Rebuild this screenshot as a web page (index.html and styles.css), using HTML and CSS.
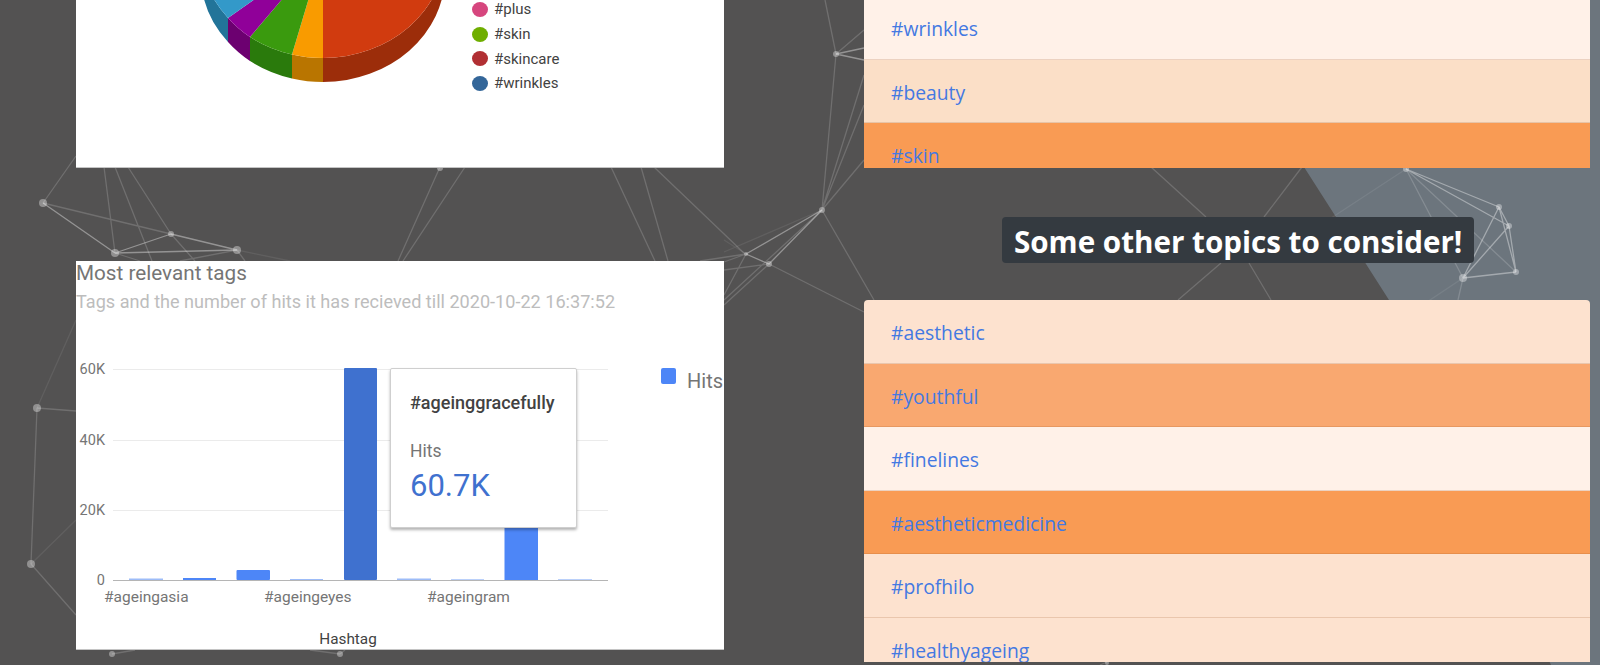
FILE: index.html
```html
<!DOCTYPE html>
<html lang="en">
<head>
<meta charset="utf-8">
<title>Hashtags</title>
<link rel="stylesheet" href="styles.css">
</head>
<body>
<svg class="backdrop" viewBox="0 0 1600 665" aria-hidden="true">
  <polygon class="slate" points="1197,0 1600,0 1600,665 1551,665 1389,300 1304,167"/>
  <path class="net net-faint" d="M76 320L37 408M76 520L31 564M237 250L290 261M1406 169L1290 245M1463 278L1400 320M822 210L724 252M746 254L724 240"/>
  <path class="net" d="M76 156L43 203M43 203L171 234M104 167L115 253M115 167L152 261M128 167L171 234M237 250L180 261M171 234L195 261M115 253L140 261M237 250L245 261M37 408L31 564M37 408L76 411M31 564L76 615
    M440 167L398 261M465 167L403 261M611 167L655 261M641 167L668 261M654 167L745 254M825 0L836 54M836 54L822 210M836 54L864 30M822 210L864 75M822 210L864 105M822 210L864 160M822 210L724 300M822 210L874 300M769 264L864 312M769 264L724 270M769 264L724 305M746 254L724 262M746 254L724 295M746 254L700 261
    M1151 167L1206 217M1302 167L1264 217M1221 263L1178 300M1249 263L1271 300M1406 169L1463 278M1406 169L1516 272M1463 278L1458 300M112 654L135 650M340 654L310 650M340 654L345 650M1107 662L1100 665"/>
  <path class="net net-bright" d="M43 203L115 253M115 253L171 234M115 253L237 250M171 234L237 250M836 54L864 60M836 54L864 48M822 210L746 254M822 210L769 264M746 254L769 264M1406 169L1499 207M1406 169L1509 226M1499 207L1509 226M1499 207L1516 272M1499 207L1463 278M1509 226L1463 278M1509 226L1516 272M1463 278L1516 272"/>
  <g class="halo">
    <circle cx="43" cy="203" r="4"/><circle cx="115" cy="253" r="4"/><circle cx="171" cy="234" r="3"/><circle cx="237" cy="250" r="4"/><circle cx="37" cy="408" r="4"/><circle cx="31" cy="564" r="4"/><circle cx="440" cy="168" r="3"/><circle cx="836" cy="54" r="3"/><circle cx="822" cy="210" r="3"/><circle cx="746" cy="254" r="2"/><circle cx="769" cy="264" r="3"/><circle cx="1406" cy="169" r="3"/><circle cx="1499" cy="207" r="3"/><circle cx="1509" cy="226" r="3"/><circle cx="1516" cy="272" r="3"/><circle cx="1463" cy="278" r="4"/><circle cx="112" cy="654" r="3"/><circle cx="340" cy="654" r="3"/><circle cx="1107" cy="663" r="2"/>
  </g>
</svg>

<main class="page">
  <section class="col-left">
    <article class="card card-pie">
      <svg class="pie" width="396" height="167" viewBox="76 0 396 167" aria-hidden="true">
        <g class="pie-side">
          <path fill="#9c2d0a" d="M323 58A122 107 0 0 0 445 -49V-25A122 107 0 0 1 323 82Z"/>
          <path fill="#b97500" d="M292 54.500A122 107 0 0 0 323 58V82A122 107 0 0 1 292 78.500Z"/>
          <path fill="#2a7a0c" d="M250 37A122 107 0 0 0 292 54.500V78.500A122 107 0 0 1 250 61Z"/>
          <path fill="#6c0070" d="M228 18A122 107 0 0 0 250 37V61A122 107 0 0 1 228 42Z"/>
          <path fill="#227499" d="M201 -49A122 107 0 0 0 228 18V42A122 107 0 0 1 201 -25Z"/>
        </g>
        <path fill="#d13b0f" d="M323 -49V58A122 107 0 0 0 445 -49Z"/>
        <path fill="#f99b00" d="M323 -49L292 54.500A122 107 0 0 0 323 58Z"/>
        <path fill="#3a9a0e" d="M323 -49L250 37A122 107 0 0 0 292 54.500Z"/>
        <path fill="#900099" d="M323 -49L228 18A122 107 0 0 0 250 37Z"/>
        <path fill="#3399c9" d="M323 -49L228 18A122 107 0 0 1 201 -49Z"/>
      </svg>
      <ul class="pie-legend">
        <li class="pie-item"><span class="dot dot-plus"></span>#plus</li>
        <li class="pie-item"><span class="dot dot-skin"></span>#skin</li>
        <li class="pie-item"><span class="dot dot-skincare"></span>#skincare</li>
        <li class="pie-item"><span class="dot dot-wrinkles"></span>#wrinkles</li>
      </ul>
    </article>

    <article class="card card-bars">
      <h2 class="chart-title">Most relevant tags</h2>
      <p class="chart-sub">Tags and the number of hits it has recieved till 2020-10-22 16:37:52</p>
      <svg class="bars" width="648" height="330" viewBox="76 319 648 330">
        <g class="grid">
          <line x1="113" x2="608" y1="369.500" y2="369.500"/>
          <line x1="113" x2="608" y1="440.500" y2="440.500"/>
          <line x1="113" x2="608" y1="510.500" y2="510.500"/>
        </g>
        <g class="axis-y">
          <text x="105" y="374">60K</text>
          <text x="105" y="445">40K</text>
          <text x="105" y="515">20K</text>
          <text x="105" y="585">0</text>
        </g>
        <g class="bar">
          <rect class="bar-trace" x="129" y="578.500" width="34" height="1.500"/>
          <rect x="183" y="578" width="33" height="2"/>
          <rect x="236.500" y="570" width="33.500" height="10" rx="1"/>
          <rect class="bar-trace" x="290" y="579" width="33" height="1"/>
          <rect class="bar-active" x="344" y="368" width="33" height="212" rx="1"/>
          <rect class="bar-trace" x="397" y="578.500" width="34" height="1.500"/>
          <rect class="bar-trace" x="451" y="579.300" width="33" height="0.700"/>
          <rect x="504.500" y="500" width="33.500" height="80"/>
          <rect class="bar-trace" x="558" y="579.300" width="34" height="0.700"/>
        </g>
        <line class="baseline" x1="113" x2="608" y1="580.500" y2="580.500"/>
        <g class="axis-x">
          <text x="104" y="602">#ageingasia</text>
          <text x="264" y="602">#ageingeyes</text>
          <text x="427" y="602">#ageingram</text>
        </g>
        <text class="axis-name" x="348" y="644">Hashtag</text>
        <rect class="bar" x="661" y="368" width="15" height="16" rx="2"/>
        <text class="bars-legend" x="687" y="388">Hits</text>
      </svg>
      <div class="tip">
        <div class="tip-key">#ageinggracefully</div>
        <div class="tip-label">Hits</div>
        <div class="tip-value">60.7K</div>
      </div>
    </article>
  </section>

  <section class="col-right">
    <ul class="tags tags-top">
      <li class="tag tag-pale"><a href="#">#wrinkles</a></li>
      <li class="tag tag-sand"><a href="#">#beauty</a></li>
      <li class="tag tag-orange"><a href="#">#skin</a></li>
    </ul>
    <h2 class="topics">Some other topics to consider!</h2>
    <ul class="tags tags-bottom">
      <li class="tag tag-peach"><a href="#">#aesthetic</a></li>
      <li class="tag tag-apricot"><a href="#">#youthful</a></li>
      <li class="tag tag-pale"><a href="#">#finelines</a></li>
      <li class="tag tag-orange"><a href="#">#aestheticmedicine</a></li>
      <li class="tag tag-peach"><a href="#">#profhilo</a></li>
      <li class="tag tag-peach"><a href="#">#healthyageing</a></li>
    </ul>
  </section>
</main>
</body>
</html>
```
FILE: styles.css
```css
* { box-sizing: border-box; }

html, body {
  margin: 0;
  height: 665px;
  overflow: hidden;
  background: #535252;
  font-family: Roboto, "Liberation Sans", sans-serif;
}

.backdrop {
  position: absolute;
  inset: 0;
  width: 1600px;
  height: 665px;
}

.slate { fill: #6c757d; }

.net {
  fill: none;
  stroke: #fff;
  stroke-width: 1.3;
  stroke-opacity: .17;
  filter: blur(.4px);
}
.net-faint { stroke-opacity: .08; }
.net-bright { stroke-opacity: .38; }

.halo { filter: blur(.7px); }
.halo circle { fill: #fff; fill-opacity: .36; }

.page {
  position: relative;
  display: flex;
  gap: 140px;
  padding: 0 10px 0 76px;
}

.col-left {
  display: flex;
  flex-direction: column;
  width: 648px;
  flex: none;
  gap: 93px;
}

.col-right {
  display: flex;
  flex-direction: column;
  flex: 1;
  min-width: 0;
}

.card {
  position: relative;
  background: #fff;
  overflow: hidden;
  border-bottom: 1px solid #c4c4c4;
}

.card-pie {
  display: flex;
  height: 168px;
}

.pie { display: block; flex: none; }

.pie-legend {
  list-style: none;
  margin: -3px 0 0;
  padding: 0;
  font-size: 15px;
  color: #424242;
}

.pie-item {
  display: flex;
  align-items: center;
  gap: 6px;
  height: 24.7px;
}

.dot {
  width: 16px;
  height: 15px;
  border-radius: 50%;
}
.dot-plus { background: #d6467e; }
.dot-skin { background: #6fae00; }
.dot-skincare { background: #b12f33; }
.dot-wrinkles { background: #336699; }

.card-bars { height: 389px; }

.chart-title {
  margin: 0;
  height: 26px;
  font-size: 20.7px;
  font-weight: 400;
  line-height: 25px;
  color: #757575;
}

.chart-sub {
  margin: 0;
  height: 32px;
  font-size: 18.1px;
  line-height: 30px;
  color: #bdbdbd;
}

.bars { display: block; }

.grid line { stroke: #ebebeb; }
.baseline { stroke: #b5b5b5; }

.axis-y text {
  font-size: 14.5px;
  fill: #757575;
  text-anchor: end;
}
.axis-x text {
  font-size: 15.5px;
  fill: #757575;
}
.axis-name {
  font-size: 15.3px;
  fill: #424242;
  text-anchor: middle;
}
.bars-legend {
  font-size: 20px;
  fill: #757575;
}

.bar, .bar rect { fill: #4d86f7; }
.bar .bar-active { fill: #3f71cf; }
.bar .bar-trace { fill: #9dbcf8; }

.tip {
  position: absolute;
  left: 314px;
  top: 107px;
  width: 187px;
  height: 160px;
  padding: 24px 19px;
  background: #fff;
  border: 1px solid #cfcfcf;
  border-radius: 2px;
  box-shadow: 0 2px 3px rgba(0, 0, 0, .3);
}

.tip-key {
  font-size: 18px;
  font-weight: 500;
  line-height: 20px;
  color: #424242;
  white-space: nowrap;
}

.tip-label {
  margin-top: 28px;
  font-size: 17.5px;
  line-height: 20px;
  color: #757575;
}

.tip-value {
  margin-top: 6px;
  font-size: 31px;
  line-height: 38px;
  color: #3f71cf;
}

.tags {
  list-style: none;
  margin: 0;
  padding: 0;
  overflow: hidden;
}

.tags-top {
  height: 172px;
  margin-top: -4px;
}

.tags-bottom {
  height: 362px;
  border-radius: 4px 4px 0 0;
}

.tag {
  height: 63.5px;
  padding: 0 27px;
  line-height: 66px;
  font-family: "Open Sans", "Noto Sans", sans-serif;
  font-size: 19.3px;
  border-bottom: 1px solid rgba(160, 90, 40, .2);
}

.tag a {
  color: #4479e2;
  text-decoration: none;
}

.tag-pale { background: #fff1e8; }
.tag-sand { background: #fbdfc7; }
.tag-peach { background: #fde2cf; }
.tag-apricot { background: #f9a870; }
.tag-orange { background: #f99b54; }

.topics {
  align-self: flex-start;
  margin: 49px 0 37px 138px;
  padding: 0 12px;
  height: 46px;
  line-height: 49px;
  font-family: "Open Sans", "Noto Sans", sans-serif;
  font-size: 29.6px;
  font-weight: 700;
  color: #fff;
  background: #343a40;
  border-radius: 4px;
  white-space: nowrap;
}
```
